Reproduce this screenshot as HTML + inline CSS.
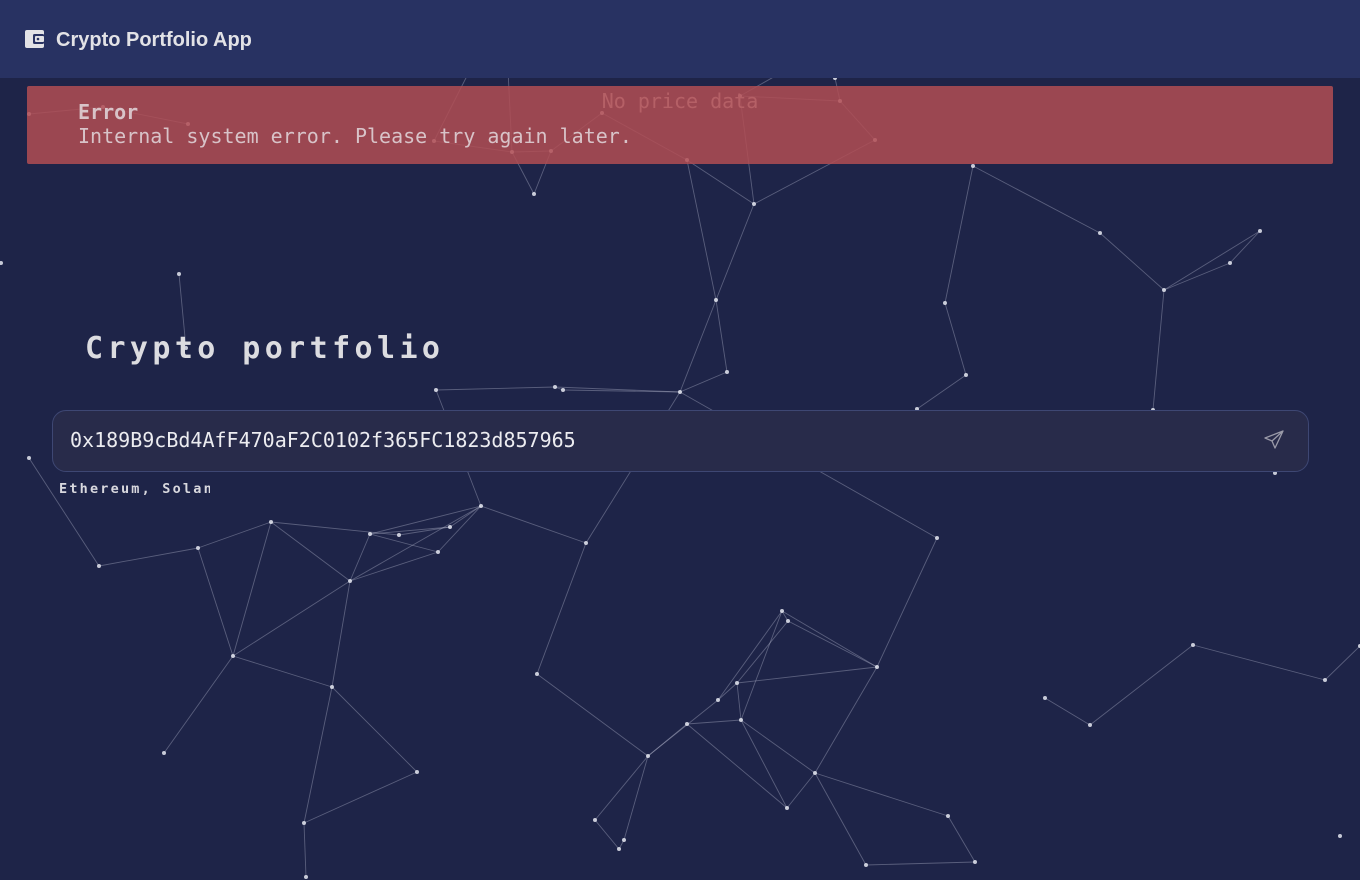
<!DOCTYPE html>
<html><head><meta charset="utf-8"><style>
*{margin:0;padding:0;box-sizing:border-box}
body{width:1360px;height:880px;background:#1e2448;position:relative;overflow:hidden;font-family:"DejaVu Sans Mono","Liberation Mono",monospace}
.hdr{position:absolute;left:0;top:0;width:1360px;height:78px;background:#283262;z-index:3}
.hdr .t{position:absolute;left:56px;top:29px;font:bold 20px "Liberation Sans",sans-serif;color:#e2e2e6}
svg.net{position:absolute;left:0;top:0;z-index:1}
.np{position:absolute;left:0;width:1360px;top:89px;text-align:center;font-size:20px;color:#c9c9d0;z-index:1}
.err{position:absolute;left:27px;top:86px;width:1306px;height:78px;background:rgba(177,78,84,0.85);border-radius:2px;z-index:2}
.err .a{position:absolute;left:51px;top:14px;font-weight:bold;font-size:20px;color:#d8c3c8}
.err .b{position:absolute;left:51px;top:38px;font-size:20px;color:#d8c3c8}
h1{position:absolute;left:85px;top:331px;font-size:30px;letter-spacing:4.4px;color:#dcdce0;z-index:2}
.inp{position:absolute;left:52px;top:410px;width:1257px;height:62px;background:#282b4a;border:1px solid #3e4773;border-radius:14px;z-index:2}
.inp span{position:absolute;left:17px;top:17px;font-size:20px;color:#ececf0}
.inp svg{position:absolute;right:22px;top:17px}
.sub{position:absolute;left:59px;top:481px;width:151px;overflow:hidden;white-space:nowrap;font-weight:bold;font-size:13.5px;letter-spacing:2.2px;color:#d8d8de;z-index:2}
</style></head><body>
<div class="hdr">
<svg style="position:absolute;left:25px;top:29px" width="20" height="20" viewBox="0 0 20 20"><rect x="0" y="1" width="19" height="18" rx="2" fill="#e2e2e6"/><rect x="8" y="5" width="11" height="10" rx="1.5" fill="#283262"/><rect x="10" y="7" width="9" height="6" rx="1" fill="#e2e2e6"/><circle cx="13" cy="10" r="1.3" fill="#283262"/></svg>
<div class="t">Crypto Portfolio App</div></div>
<svg class="net" width="1360" height="880" id="net"></svg>
<div class="np">No price data</div>
<div class="err"><div class="a">Error</div><div class="b">Internal system error. Please try again later.</div></div>
<h1>Crypto portfolio</h1>
<div class="inp"><span>0x189B9cBd4AfF470aF2C0102f365FC1823d857965</span>
<svg width="24" height="24" viewBox="0 0 24 24" fill="none" stroke="#9a9aa8" stroke-width="1.3" stroke-linejoin="round"><path d="M21 3 L3 10 L10 13 L13 20 Z M21 3 L10 13"/></svg></div>
<div class="sub">Ethereum, Solana</div>
<script>
var N={A:[29,114],B:[103,107],C:[188,124],D:[434,141],E:[512,152],F:[551,151],G:[534,194],H:[602,113],I:[687,160],J:[754,204],K:[740,96],L:[840,101],M:[875,140],Nn:[973,166],O:[835,78],P:[1100,233],Q:[1164,290],R:[1230,263],S:[1260,231],T:[945,303],U:[966,375],V:[716,300],W:[727,372],X:[680,392],Y:[563,390],Z:[555,387],a:[436,390],b:[179,274],c:[186,348],d:[1,263],e:[29,458],f:[99,566],g:[198,548],h:[271,522],i:[350,581],j:[370,534],k:[399,535],l:[438,552],m:[450,527],n:[481,506],o:[586,543],p:[233,656],q:[332,687],r:[164,753],s:[417,772],t:[304,823],u:[306,877],v:[537,674],w:[937,538],x:[782,611],y:[788,621],z:[877,667],aa:[737,683],ab:[718,700],ac:[741,720],ad:[687,724],ae:[648,756],af:[815,773],ag:[787,808],ah:[595,820],ai:[619,849],aj:[624,840],ak:[866,865],al:[948,816],am:[975,862],an:[1045,698],ao:[1090,725],ap:[1193,645],aq:[1325,680],ar:[1360,646],as:[1340,836],at:[1275,473],au:[1153,410],av:[917,409],bx:[470,70],by:[508,70],bz:[786,70]};
var E="A-B B-C D-E E-F E-G G-F F-H H-I I-J J-K K-L L-M M-N M-J O-L Nn-P P-Q Q-R R-S S-Q Nn-T T-U U-av J-V V-W W-X V-X X-Y Y-Z Z-X a-Z a-n X-o b-c e-f f-g g-h h-i h-k j-i i-l j-l j-m k-m m-n l-n i-n n-o j-n p-g p-h p-i i-q p-q p-r q-s q-t s-t t-u o-v v-ae x-y x-z y-z x-ab y-aa x-ac aa-ab aa-ac ab-ae ad-ac ad-ae ac-af aa-z ac-ag af-ag af-z z-w ae-ah ah-ai ai-aj aj-ae ad-ag af-ak ak-am am-al af-al an-ao ao-ap ap-aq aq-ar Q-au D-bx E-by K-bz X-w I-V".split(" ");
var s="";E.forEach(function(e){var p=e.split("-"),a=N[p[0]],b=N[p[1]];if(!a||!b)return;s+='<line x1="'+a[0]+'" y1="'+a[1]+'" x2="'+b[0]+'" y2="'+b[1]+'" stroke="#c8cce0" stroke-opacity="0.35" stroke-width="0.9"/>';});
for(var k in N){s+='<circle cx="'+N[k][0]+'" cy="'+N[k][1]+'" r="2" fill="#e4e6f0" fill-opacity="0.85"/>';}
document.getElementById("net").innerHTML=s;
</script>
</body></html>
